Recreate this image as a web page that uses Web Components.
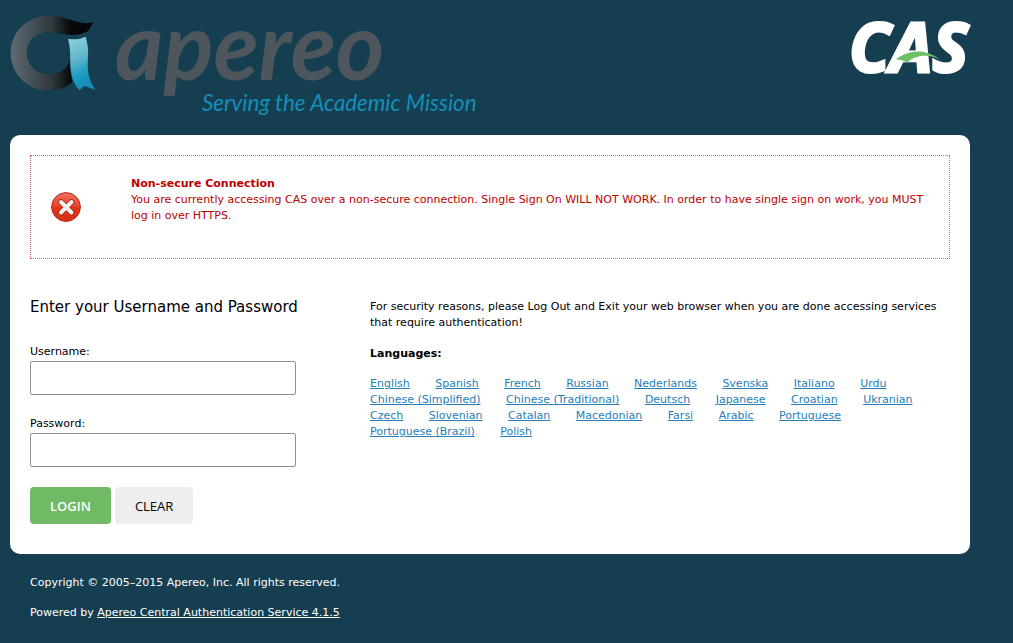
<!DOCTYPE html>
<html lang="en">
<head>
<meta charset="utf-8">
<meta name="viewport" content="width=device-width, initial-scale=1">
<title>CAS – Central Authentication Service</title>
<style>
body { margin: 0; background: #153e50; color: #000; font: 11px/16px "DejaVu Sans", Verdana, sans-serif; }
</style>
</head>
<body>
<cas-page>
  <cas-header slot="header"></cas-header>
  <cas-alert heading="Non-secure Connection">You are currently accessing CAS over a non-secure connection. Single Sign On WILL NOT WORK. In order to have single sign on work, you MUST log in over HTTPS.</cas-alert>
  <cas-login-form slot="form"></cas-login-form>
  <cas-sidebar slot="aside">For security reasons, please Log Out and Exit your web browser when you are done accessing services that require authentication!</cas-sidebar>
  <cas-footer slot="footer"></cas-footer>
</cas-page>
<script>
function define(name, html, init) {
  const template = document.createElement('template');
  template.innerHTML = html;
  customElements.define(name, class extends HTMLElement {
    constructor() {
      super();
      this.attachShadow({ mode: 'open' }).append(template.content.cloneNode(true));
    }
    connectedCallback() { if (init) init(this, this.shadowRoot); }
  });
}

define('cas-page', `
<style>
:host { display: block; max-width: 960px; padding: 10px; }
main { background: #fff; border-radius: 10px; padding: 20px 20px 30px; }
.columns { display: grid; grid-template-columns: minmax(280px, 340px) 1fr; margin-top: 40px; }
@media (max-width: 640px) { .columns { grid-template-columns: 1fr; gap: 30px; } }
</style>
<slot name="header"></slot>
<main>
  <slot></slot>
  <div class="columns"><slot name="form"></slot><slot name="aside"></slot></div>
</main>
<slot name="footer"></slot>`);

define('cas-header', `
<style>
:host { display: block; margin-bottom: 15px; }
header { display: flex; justify-content: space-between; align-items: flex-start; }
a { display: block; }
svg { display: block; max-width: 100%; overflow: visible; }
</style>
<header>
  <a href="#apereo" aria-label="Apereo">
    <svg width="470" height="110" viewBox="30 30 1410 330">
      <defs>
        <linearGradient id="ring" gradientUnits="userSpaceOnUse" x1="32" y1="0" x2="280" y2="0">
          <stop offset="0" stop-color="#5f6a72"/><stop offset=".5" stop-color="#2e383d"/><stop offset=".74" stop-color="#050708"/><stop offset="1" stop-color="#050607"/>
        </linearGradient>
        <linearGradient id="ribbon" x1="0" y1="0" x2=".25" y2="1">
          <stop offset="0" stop-color="#8fd3dc"/><stop offset=".45" stop-color="#65b8cc"/><stop offset=".75" stop-color="#1f9fc4"/><stop offset="1" stop-color="#168bb5"/>
        </linearGradient>
      </defs>
      <path fill="url(#ring)" d="M280 67C260 72 238 69 214 60C188 51 167 47 145 47C82 47 32 97 32 158C32 221 82 271 145 271C174 271 200 262 217 246L208 180C205 205 180 223 148 223C109 223 80 195 80 158C80 122 109 96 145 96C167 96 190 105 215 105C235 105 251 101 263 94C269 88 274 76 280 67Z"/>
      <path fill="url(#ribbon)" d="M204 116C225 120 241 117 257 110C262 128 266 146 264 170C262 205 262 238 287 269L253 258L238 271C216 244 211 220 211 185C211 154 209 134 204 116Z"/>
      <text x="345" y="239" font-family="Lato, sans-serif" font-weight="700" font-style="italic" font-size="279" fill="#4d565c">apereo</text>
      <text x="606" y="333" font-family="Lato, sans-serif" font-style="italic" font-size="67" fill="#148fb8">Serving the Academic Mission</text>
    </svg>
  </a>
  <a href="#cas" aria-label="CAS">
    <svg width="120" height="70" viewBox="30 15 360 210">
      <text x="27" y="202" font-family="'Open Sans', sans-serif" font-weight="700" font-style="italic" font-size="202" fill="#fff" stroke="#fff" stroke-width="9">CAS</text>
      <path fill="#6cc065" d="M167 163C195 142 247 120 307 168C275 146 225 147 203 173C191 167 180 164 167 163Z"/>
    </svg>
  </a>
</header>`);

define('cas-alert', `
<style>
:host { display: flex; align-items: center; min-height: 102px; border: 1px dotted #d06060; color: #b00; }
svg { flex: none; margin-left: 20px; }
div { margin: 0 20px 14px 50px; }
h2, p { margin: 0; font-size: 11px; line-height: 16px; }
</style>
<svg width="30" height="30" viewBox="0 0 30 30" aria-hidden="true">
  <defs><linearGradient id="red" x1="0" y1="0" x2="0" y2="1"><stop offset="0" stop-color="#f07060"/><stop offset=".5" stop-color="#e64228"/><stop offset=".52" stop-color="#e23418"/><stop offset="1" stop-color="#d43218"/></linearGradient></defs>
  <circle cx="15" cy="15" r="14.4" fill="url(#red)" stroke="#b52a2a"/>
  <path d="M10 10L20.500 20.500M20.500 10L10 20.500" stroke="#a92413" stroke-width="5.500" stroke-linecap="round"/>
  <path d="M10 10L20.500 20.500M20.500 10L10 20.500" stroke="#f4f1f0" stroke-width="4" stroke-linecap="round"/>
</svg>
<div><h2></h2><p><slot></slot></p></div>`, (host, root) => {
  root.querySelector('h2').textContent = host.getAttribute('heading');
});

define('cas-login-form', `
<style>
:host { display: block; }
h2 { margin: 0 0 28px; font-size: 15px; line-height: 16px; font-weight: 400; }
.field { margin-bottom: 20px; }
label { display: block; padding-top: 1px; margin-bottom: 1px; }
input { display: block; box-sizing: border-box; width: 266px; max-width: 100%; height: 34px; padding: 6px; border: 1px solid #8f8f9d; border-radius: 2px; background: #fff; font: inherit; }
.actions { display: flex; gap: 4px; }
button { height: 37px; padding: 0 20px; border: 0; border-radius: 4px; background: #eee; color: #000; font: 400 13px/18px "Open Sans", sans-serif; }
.submit { background: #70ba65; color: #fff; font-weight: 600; }
</style>
<form>
  <h2>Enter your Username and Password</h2>
  <div class="field"><label for="username">Username:</label><input id="username" type="text" autocomplete="off"></div>
  <div class="field"><label for="password">Password:</label><input id="password" type="password" autocomplete="off"></div>
  <div class="actions"><button class="submit" type="submit">LOGIN</button><button type="reset">CLEAR</button></div>
</form>`);

define('cas-sidebar', `
<style>
:host { display: block; }
p { margin: 0 0 15px; }
h3 { margin: 0 0 14px; font-size: 11px; line-height: 16px; }
ul { margin: 0; padding: 0; list-style: none; }
li { display: inline-block; margin-right: 22px; }
a { color: #257eb7; }
</style>
<p><slot></slot></p>
<h3>Languages:</h3>
<ul></ul>`, (host, root) => {
  const list = root.querySelector('ul');
  const names = ['English', 'Spanish', 'French', 'Russian', 'Nederlands', 'Svenska', 'Italiano', 'Urdu', 'Chinese (Simplified)', 'Chinese (Traditional)', 'Deutsch', 'Japanese', 'Croatian', 'Ukranian', 'Czech', 'Slovenian', 'Catalan', 'Macedonian', 'Farsi', 'Arabic', 'Portuguese', 'Portuguese (Brazil)', 'Polish'];
  list.innerHTML = names.map(name => '<li><a href="#locale">' + name + '</a></li>').join(' ');
});

define('cas-footer', `
<style>
:host { display: block; padding: 21px 20px 11px; color: #fff; }
p { margin: 0 0 14px; }
p:last-child { margin: 0; }
a { color: inherit; }
</style>
<footer>
  <p>Copyright © 2005–2015 Apereo, Inc. All rights reserved.</p>
  <p>Powered by <a href="#about">Apereo Central Authentication Service 4.1.5</a></p>
</footer>`);
</script>
</body>
</html>
